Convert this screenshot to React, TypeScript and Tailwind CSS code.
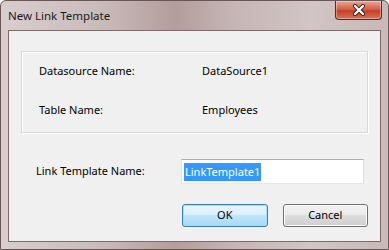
const font = { fontFamily: '"Noto Sans", "Open Sans", Arial, sans-serif' };

function CloseButton() {
  return (
    <div className="absolute right-[6px] top-0 flex h-[19px] w-[47px] items-center justify-center rounded-b-[4px] border border-t-0 border-[#5b2a24] bg-[linear-gradient(#e6a898,#d4614a_45%,#c33f26_55%,#d8745a)] shadow-[inset_0_0_0_1px_rgba(255,255,255,0.35)]">
      <svg width="14" height="12" viewBox="0 0 14 12">
        <path d="M3 2 L11 10 M11 2 L3 10" stroke="#3a1a14" strokeWidth="4" strokeLinecap="round" />
        <path d="M3 2 L11 10 M11 2 L3 10" stroke="#ffffff" strokeWidth="2.4" strokeLinecap="round" />
      </svg>
    </div>
  );
}

export default function App() {
  return (
    <div
      className="relative h-[250px] w-[389px] overflow-hidden rounded-t-[6px] border border-[#6a5656] bg-[linear-gradient(90deg,#d9cdcd_0%,#cbbcbc_25%,#b49c9c_45%,#c6b5b5_60%,#d2c5c5_80%,#c9b9b9_100%)] text-[11px] text-black"
      style={font}
    >
      <CloseButton />
      {/* title */}
      <div className="flex h-[29px] items-center pl-[7px] text-[11.5px] text-[#1b1b1b]">
        New Link Template
      </div>

      {/* client area */}
      <div className="mx-[7px] h-[212px] border border-[#7d6b6b] bg-[#f0f0f0] px-[12px] pt-[20px]">
        <div className="flex h-[82px] flex-col border border-[#d8d8d8] pl-[17px] shadow-[inset_1px_1px_0_#ffffff,1px_1px_0_#ffffff]">
          <div className="mt-[9px] flex h-[20px] items-center">
            <span className="w-[163px]">Datasource Name:</span>
            <span>DataSource1</span>
          </div>
          <div className="mt-[19px] flex h-[20px] items-center">
            <span className="w-[163px]">Table Name:</span>
            <span>Employees</span>
          </div>
        </div>

        <div className="mt-[26px] flex items-center">
          <span className="w-[160px] pl-[15px]">Link Template Name:</span>
          <div className="flex h-[25px] w-[183px] items-center border border-[#abadb3] border-l-[#e2e3ea] border-r-[#dbdfe6] border-b-[#e3e9ef] bg-white pl-[2px]">
            <span className="bg-[#3399ff] px-[1px] leading-[18px] text-white">LinkTemplate1</span>
          </div>
        </div>

        <div className="mt-[20px] flex">
          <div className="ml-[161px] flex h-[23px] w-[86px] items-center justify-center rounded-[3px] border border-[#3c7fb1] bg-[linear-gradient(#eaf6fd_0%,#d9f0fc_45%,#bee6fd_50%,#a7d9f5_100%)] shadow-[inset_0_0_0_1px_#9ee0f8]">
            OK
          </div>
          <div className="ml-[15px] flex h-[23px] w-[86px] items-center justify-center rounded-[3px] border border-[#707070] bg-[linear-gradient(#f2f2f2_0%,#ebebeb_45%,#dddddd_50%,#cfcfcf_100%)] shadow-[inset_0_0_0_1px_#fcfcfc]">
            Cancel
          </div>
        </div>
      </div>
    </div>
  );
}
